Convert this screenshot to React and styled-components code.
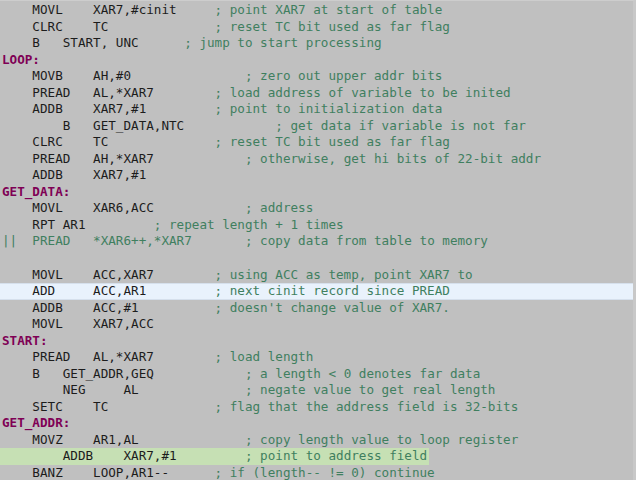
import React from 'react';
import styled, { createGlobalStyle } from 'styled-components';

const GlobalStyle = createGlobalStyle`
    html, body {
        margin: 0;
        padding: 0;
        background: #c0c0c0;
    }
`;

const CodeBlock = styled.pre`
    margin: 0;
    width: 636px;
    height: 480px;
    box-sizing: border-box;
    overflow: hidden;
    padding-top: 1px;
    background-color: #c0c0c0;
    border-top: 1px solid #cdcdcd;
    border-right: 3px solid #c8c8c8;
    font-family: "DejaVu Sans Mono", "Liberation Mono", monospace;
    font-size: 12.62px;
    line-height: 16.54px;
    color: #1c1c1c;
`;

const Line = styled.div`
    box-sizing: border-box;
    height: 16.54px;
    padding-left: 2px;
    white-space: pre;
    ${(p) => p.$mark === 'blue' && `
        background-color: #e9f2fc;
        border-top: 1px solid #d6e0ec;
        border-bottom: 1px solid #d6e0ec;
        line-height: 14.54px;
    `}
    ${(p) => p.$mark === 'green' && `
        width: fit-content;
        padding-right: 2px;
        background-color: #c6e0b4;
    `}
`;

const Label = styled.span`
    color: #7f0055;
    font-weight: bold;
`;

const Comment = styled.span`
    color: #3f7f5f;
`;

const code = [
    { op: '    MOVL    XAR7,#cinit', pad: 28, c: '; point XAR7 at start of table' },
    { op: '    CLRC    TC', pad: 28, c: '; reset TC bit used as far flag' },
    { op: '    B   START, UNC', pad: 24, c: '; jump to start processing' },
    { label: 'LOOP:' },
    { op: '    MOVB    AH,#0', pad: 32, c: '; zero out upper addr bits' },
    { op: '    PREAD   AL,*XAR7', pad: 28, c: '; load address of variable to be inited' },
    { op: '    ADDB    XAR7,#1', pad: 28, c: '; point to initialization data' },
    { op: '        B   GET_DATA,NTC', pad: 36, c: '; get data if variable is not far' },
    { op: '    CLRC    TC', pad: 28, c: '; reset TC bit used as far flag' },
    { op: '    PREAD   AH,*XAR7', pad: 32, c: '; otherwise, get hi bits of 22-bit addr' },
    { op: '    ADDB    XAR7,#1' },
    { label: 'GET_DATA:' },
    { op: '    MOVL    XAR6,ACC', pad: 32, c: '; address' },
    { op: '    RPT AR1', pad: 20, c: '; repeat length + 1 times' },
    { green: '||  PREAD   *XAR6++,*XAR7', pad: 32, c: '; copy data from table to memory' },
    { op: '' },
    { op: '    MOVL    ACC,XAR7', pad: 28, c: '; using ACC as temp, point XAR7 to' },
    { op: '    ADD     ACC,AR1', pad: 28, c: '; next cinit record since PREAD', mark: 'blue' },
    { op: '    ADDB    ACC,#1', pad: 28, c: "; doesn't change value of XAR7." },
    { op: '    MOVL    XAR7,ACC' },
    { label: 'START:' },
    { op: '    PREAD   AL,*XAR7', pad: 28, c: '; load length' },
    { op: '    B   GET_ADDR,GEQ', pad: 32, c: '; a length < 0 denotes far data' },
    { op: '        NEG     AL', pad: 32, c: '; negate value to get real length' },
    { op: '    SETC    TC', pad: 28, c: '; flag that the address field is 32-bits' },
    { label: 'GET_ADDR:' },
    { op: '    MOVZ    AR1,AL', pad: 32, c: '; copy length value to loop register' },
    { op: '        ADDB    XAR7,#1', pad: 32, c: '; point to address field', mark: 'green' },
    { op: '    BANZ    LOOP,AR1--', pad: 28, c: '; if (length-- != 0) continue' },
];

export default function App() {
    return (
        <>
            <GlobalStyle />
            <CodeBlock>
                {code.map((l, i) => (
                    <Line key={i} $mark={l.mark}>
                        {l.label && <Label>{l.label}</Label>}
                        {l.op !== undefined && (l.c ? l.op.padEnd(l.pad) : l.op || ' ')}
                        {l.green && <Comment>{l.green.padEnd(l.pad)}</Comment>}
                        {l.c && <Comment>{l.c}</Comment>}
                    </Line>
                ))}
            </CodeBlock>
        </>
    );
}
